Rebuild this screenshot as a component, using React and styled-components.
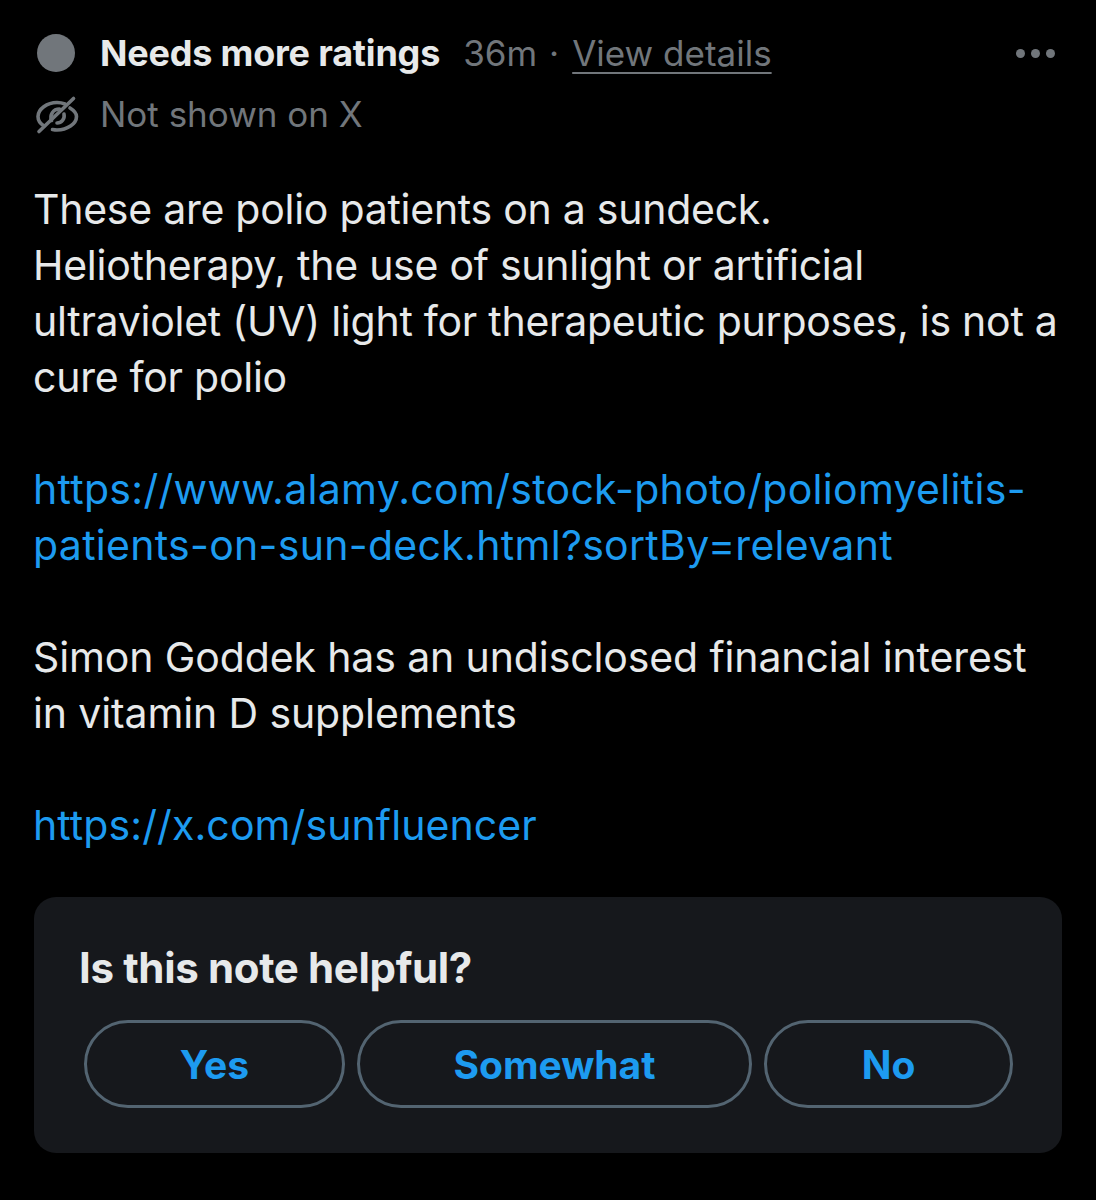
import React from "react";
import styled, { createGlobalStyle } from "styled-components";

const Global = createGlobalStyle`
  html, body { margin: 0; padding: 0; background: #000; }
  body { font-family: "Inter", "Liberation Sans", sans-serif; }
`;

const Page = styled.main`
  width: 1096px;
  height: 1200px;
  box-sizing: border-box;
  background: #000;
  padding: 25px 34px 0;
  overflow: hidden;
`;

const StatusRow = styled.div`
  display: flex;
  align-items: center;
  height: 56px;
  font-size: 35px;
  letter-spacing: 0;
  & + & { margin-top: 5px; }
`;

const IconSlot = styled.div`
  width: 66px;
  flex: none;
  display: flex;
  padding-left: 2px;
  box-sizing: border-box;
`;

const Dot = styled.span`
  width: 38px;
  height: 38px;
  border-radius: 50%;
  background: #71767b;
  margin-left: 1px;
`;

const Title = styled.strong`
  color: #e7e9ea;
  font-size: 36px;
  font-weight: 700;
  letter-spacing: -0.2px;
`;

const Meta = styled.span`
  color: #71767b;
  margin-left: 23px;
`;

const Sep = styled.span`
  color: #71767b;
  margin: 0 13px 0 12px;
`;

const Details = styled.span`
  color: #71767b;
  text-decoration: underline;
  text-decoration-thickness: 2px;
  text-underline-offset: 6px;
`;

const More = styled.div`
  margin-left: auto;
  margin-right: 7px;
  display: flex;
  gap: 6px;
`;

const MoreDot = styled.span`
  width: 9px;
  height: 9px;
  border-radius: 50%;
  background: #71767b;
`;

const Muted = styled.span`
  color: #71767b;
`;

const Note = styled.div`
  margin-top: 39px;
  margin-left: -1px;
  color: #e7e9ea;
  font-size: 41px;
  line-height: 56px;
  letter-spacing: -0.26px;
`;

const Para = styled.p`
  margin: 0 0 56px;
  letter-spacing: ${(p) => p.$spacing ?? -0.26}px;
  &:last-child { margin-bottom: 0; }
`;

const Link = styled.span`
  color: #1d9bf0;
`;

const Card = styled.section`
  margin-top: 44px;
  width: 1028px;
  height: 256px;
  box-sizing: border-box;
  background: #16181c;
  border-radius: 22px;
  padding: 43px 45px 0;
`;

const Question = styled.h2`
  margin: 0;
  color: #e7e9ea;
  font-size: 42px;
  line-height: 56px;
  font-weight: 700;
  letter-spacing: -0.35px;
`;

const Buttons = styled.div`
  display: flex;
  gap: 12px;
  margin-top: 24px;
  margin-left: 5px;
`;

const Choice = styled.button`
  width: ${(p) => p.$w}px;
  height: 88px;
  box-sizing: border-box;
  border: 3px solid #536471;
  border-radius: 44px;
  background: transparent;
  color: #1d9bf0;
  font: 700 39px "Inter", "Liberation Sans", sans-serif;
  padding: 0;
`;

const EyeOff = () => (
  <svg width="44" height="44" viewBox="0 0 44 44" fill="none" stroke="#71767b" strokeWidth="3.6" strokeLinecap="round">
    <path d="M8 34C4 31.5 2 28 2 24.5C2 17 11 10.5 21 10.5C24 10.5 26.5 11 29 12" />
    <path d="M34 16C38 18.5 40.5 21 40.5 24.5C40.5 32 31 38 21 38C19.5 38 18 37.8 16.5 37.5" />
    <path d="M15.5 28.5C13.5 23 17 17 23.5 17" />
    <path d="M28 22C29 27 25.5 31 21 31" />
    <path d="M3 39.5L37.5 6.5" />
  </svg>
);

export default function App() {
  return (
    <Page>
      <Global />
      <StatusRow>
        <IconSlot><Dot /></IconSlot>
        <Title>Needs more ratings</Title>
        <Meta>36m</Meta>
        <Sep>·</Sep>
        <Details>View details</Details>
        <More><MoreDot /><MoreDot /><MoreDot /></More>
      </StatusRow>
      <StatusRow>
        <IconSlot><EyeOff /></IconSlot>
        <Muted>Not shown on X</Muted>
      </StatusRow>
      <Note>
        <Para>
          These are polio patients on a sundeck.<br />
          Heliotherapy, the use of sunlight or artificial<br />
          ultraviolet (UV) light for therapeutic purposes, is not a<br />
          cure for polio
        </Para>
        <Para $spacing={0.3}>
          <Link>https://www.alamy.com/stock-photo/poliomyelitis-<br />patients-on-sun-deck.html?sortBy=relevant</Link>
        </Para>
        <Para $spacing={-0.12}>
          Simon Goddek has an undisclosed financial interest<br />
          in vitamin D supplements
        </Para>
        <Para $spacing={0.1}>
          <Link>https://x.com/sunfluencer</Link>
        </Para>
      </Note>
      <Card>
        <Question>Is this note helpful?</Question>
        <Buttons>
          <Choice $w={261}>Yes</Choice>
          <Choice $w={395}>Somewhat</Choice>
          <Choice $w={249}>No</Choice>
        </Buttons>
      </Card>
    </Page>
  );
}
